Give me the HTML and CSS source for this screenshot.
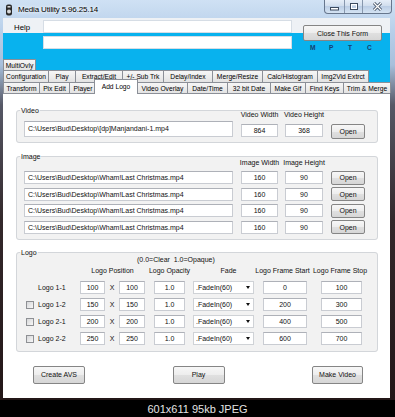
FILE: index.html
```html
<!DOCTYPE html>
<html>
<head>
<meta charset="utf-8">
<title>Media Utility</title>
<link rel="stylesheet" href="styles.css">
</head>
<body>
<div class="shot">
  <div class="window">
    <div class="titlebar">
      <svg class="appicon" width="8" height="12" viewBox="0 0 8 12"><rect x="1" y="0.5" width="6" height="11" rx="2" fill="#2a2a2a"/><circle cx="4" cy="7.5" r="2" fill="#d8d8d8"/><rect x="2.5" y="2" width="3" height="1.6" fill="#d8d8d8"/></svg>
      <span class="title">Media Utility 5.96.25.14</span>
      <div class="winctl">
        <span class="wc wc-min"><svg width="19" height="13" viewBox="0 0 19 13"><rect x="5.5" y="7.5" width="8" height="2.5" fill="#fff" stroke="#3c4a5e"/></svg></span>
        <span class="wc wc-max"><svg width="18" height="13" viewBox="0 0 18 13"><rect x="5.5" y="3.5" width="7" height="6" fill="none" stroke="#3c4a5e"/><rect x="6.5" y="4.5" width="5" height="4" fill="none" stroke="#fff"/></svg></span>
        <span class="wc wc-close"><svg width="29" height="13" viewBox="0 0 29 13"><path d="M11 3L18 10M18 3L11 10" stroke="#3c4a5e" stroke-width="3"/><path d="M11 3L18 10M18 3L11 10" stroke="#fff" stroke-width="1.3"/></svg></span>
      </div>
    </div>
    <div class="frame">
      <div class="client">
        <div class="head">
          <div class="menu">Help</div>
          <div class="ttb ttb1"></div>
          <div class="headright">
            <button class="btn closebtn">Close This Form</button>
            <div class="mptc"><span>M</span><span>P</span><span>T</span><span>C</span></div>
          </div>
          <div class="ttb ttb2"></div>
        </div>
        <div class="tabs">
          <div class="tabrow r0"><div class="tab">MultiOvly</div></div>
          <div class="tabrow r1">
            <div class="tab">Configuration</div><div class="tab">Play</div><div class="tab">Extract/Edit</div><div class="tab">+/- Sub Trk</div><div class="tab">Delay/Index</div><div class="tab">Merge/Resize</div><div class="tab">Calc/Histogram</div><div class="tab">Img2Vid Extrct</div>
          </div>
          <div class="tabrow r2">
            <div class="tab">Transform</div><div class="tab">Pix Edit</div><div class="tab">Player</div><div class="tab sel">Add Logo</div><div class="tab">Video Overlay</div><div class="tab">Date/Time</div><div class="tab">32 bit Date</div><div class="tab">Make Gif</div><div class="tab">Find Keys</div><div class="tab">Trim &amp; Merge</div>
          </div>
        </div>
        <div class="page">
          <fieldset class="grp vgrp">
            <legend>Video</legend>
            <div class="fgrid fhdr">
              <span></span><span class="hc nw">Video Width</span><span class="hc nh">Video Height</span><span></span>
            </div>
            <div class="fgrid vrow">
              <div class="tb path tall">C:\Users\Bud\Desktop\[dp]Manjandani-1.mp4</div>
              <div class="tb num nw">864</div>
              <div class="tb num nh">368</div>
              <button class="btn open vopen">Open</button>
            </div>
          </fieldset>

          <fieldset class="grp igrp">
            <legend>Image</legend>
            <div class="fgrid fhdr ihdr">
              <span></span><span class="hc nw">Image Width</span><span class="hc nh">Image Height</span><span></span>
            </div>
            <div class="fgrid irows">
              <div class="tb path">C:\Users\Bud\Desktop\Wham!Last Christmas.mp4</div><div class="tb num nw">160</div><div class="tb num nh">90</div><button class="btn open">Open</button>
              <div class="tb path">C:\Users\Bud\Desktop\Wham!Last Christmas.mp4</div><div class="tb num nw">160</div><div class="tb num nh">90</div><button class="btn open">Open</button>
              <div class="tb path">C:\Users\Bud\Desktop\Wham!Last Christmas.mp4</div><div class="tb num nw">160</div><div class="tb num nh">90</div><button class="btn open">Open</button>
              <div class="tb path">C:\Users\Bud\Desktop\Wham!Last Christmas.mp4</div><div class="tb num nw">160</div><div class="tb num nh">90</div><button class="btn open">Open</button>
            </div>
          </fieldset>

          <fieldset class="grp lgrp">
            <legend>Logo</legend>
            <div class="lnote">(0.0=Clear&nbsp; 1.0=Opaque)</div>
            <div class="lgrid lhdr">
              <span class="h-pos">Logo Position</span>
              <span class="h-op">Logo Opacity</span>
              <span class="h-fade">Fade</span>
              <span class="h-start">Logo Frame Start</span>
              <span class="h-stop">Logo Frame Stop</span>
            </div>
            <div class="lgrid lrows">
              <span></span><span class="llabel">Logo 1-1</span><div class="tb num bx">100</div><span class="x">X</span><div class="tb num by">100</div><div class="tb num bo">1.0</div><div class="combo"><span>.FadeIn(60)</span><i class="arrow"></i></div><div class="tb num bs">0</div><div class="tb num be">100</div>
              <span class="cb"></span><span class="llabel">Logo 1-2</span><div class="tb num bx">150</div><span class="x">X</span><div class="tb num by">150</div><div class="tb num bo">1.0</div><div class="combo"><span>.FadeIn(60)</span><i class="arrow"></i></div><div class="tb num bs">200</div><div class="tb num be">300</div>
              <span class="cb"></span><span class="llabel">Logo 2-1</span><div class="tb num bx">200</div><span class="x">X</span><div class="tb num by">200</div><div class="tb num bo">1.0</div><div class="combo"><span>.FadeIn(60)</span><i class="arrow"></i></div><div class="tb num bs">400</div><div class="tb num be">500</div>
              <span class="cb"></span><span class="llabel">Logo 2-2</span><div class="tb num bx">250</div><span class="x">X</span><div class="tb num by">250</div><div class="tb num bo">1.0</div><div class="combo"><span>.FadeIn(60)</span><i class="arrow"></i></div><div class="tb num bs">600</div><div class="tb num be">700</div>
            </div>
          </fieldset>

          <div class="actions">
            <button class="btn abtn">Create AVS</button>
            <button class="btn abtn">Play</button>
            <button class="btn abtn mk">Make Video</button>
          </div>
        </div>
      </div>
    </div>
  </div>
  <div class="caption">601x611 95kb JPEG</div>
</div>
</body>
</html>
```

FILE: styles.css
```css
* { box-sizing: border-box; }
html, body { margin: 0; padding: 0; }
body {
  width: 395px;
  height: 417px;
  overflow: hidden;
  background: #000;
  font-family: "Liberation Sans", Arial, sans-serif;
  color: #111;
}
.shot { display: flex; flex-direction: column; height: 417px; }

.window {
  height: 400px;
  display: flex;
  flex-direction: column;
  background: linear-gradient(to bottom, #cfe1f4 0px, #b9d0ea 30px, #a7bfdb 65px, #565866 105px, #33282b 220px, #231617 400px);
}

/* title bar */
.titlebar {
  height: 18px;
  display: flex;
  align-items: center;
  padding-left: 5px;
}
.appicon { display: block; margin-top: 1px; }
.title {
  margin-left: 5px;
  font-size: 8px;
  letter-spacing: -0.15px;
  color: #000;
  text-shadow: 0 0 5px #fff, 0 0 3px #fff;
}
.winctl {
  margin-left: auto;
  margin-right: 3px;
  align-self: flex-start;
  display: flex;
  height: 14px;
  border: 1px solid #66768d;
  border-top: none;
  border-radius: 0 0 4px 4px;
  overflow: hidden;
  background: linear-gradient(#e6eef8, #cfdcec 50%, #bccee5 50%, #d4e3f3);
}
.wc { display: block; height: 13px; }
.wc svg { display: block; }
.wc + .wc { border-left: 1px solid #8797ad; }
.wc-min { width: 19px; }
.wc-max { width: 18px; }
.wc-close { width: 29px; }

/* frame + client */
.frame { flex: 1; display: flex; padding: 0 5px 2px 3px; }
.client { flex: 1; display: flex; flex-direction: column; background: #fff; }

.head {
  display: grid;
  grid-template-columns: 40px 249px 1fr;
  grid-template-rows: 15px 26px;
  background: linear-gradient(#eef1f5 15px, #08b2ee 15px);
}
.menu {
  grid-column: 1; grid-row: 1;
  font-size: 7.8px;
  padding: 5px 0 0 11px;
  color: #000;
}
.ttb { background: #fff; border: 1px solid #d6dde5; }
.ttb1 { grid-column: 2; grid-row: 1; height: 13px; align-self: end; }
.ttb2 { grid-column: 2; grid-row: 2; height: 13px; margin-top: 3px; }
.headright {
  grid-column: 3; grid-row: 1 / span 2;
  display: flex; flex-direction: column; align-items: flex-start;
  padding: 7px 0 0 11px;
}
.closebtn { width: 79px; height: 16px; font-size: 6.8px; }
.mptc {
  display: flex;
  margin: 3px 0 0 7px;
  font-size: 6.6px;
  font-weight: bold;
  line-height: 8px;
  color: #15406f;
}
.mptc span { width: 19px; }

/* tabs */
.tabs { background: #08b2ee; display: flex; flex-direction: column; }
.tabrow { display: grid; }
.r0 { grid-template-columns: 32px; height: 11px; }
.r1 { grid-template-columns: 45px 27px 47px 41px 49px 50px 55px 51px; height: 12px; }
.r2 { grid-template-columns: 36px 30px 27px 41px 50px 40px 43px 35px 38px 47px; height: 11px; }
.tab {
  border: 1px solid #8b8f97;
  border-bottom: none;
  margin-right: -1px;
  background: linear-gradient(#f6f6f6, #e3e3e3);
  font-size: 6.7px;
  line-height: 9px;
  color: #000;
  display: flex;
  align-items: center;
  justify-content: center;
  white-space: nowrap;
  overflow: hidden;
}
.tab.sel {
  background: #fff;
  margin: -3px -1px -1px -2px;
  position: relative;
  z-index: 1;
  padding-bottom: 2px;
}

/* page */
.page {
  flex: 1;
  border-top: 1px solid #8b8f97;
  background: #fff;
  padding-top: 12px;
  display: flex;
  flex-direction: column;
  font-size: 7px;
}
.grp {
  margin: 0 0 0 13px;
  width: 362px;
  min-width: 0;
  border: 1px solid #d3d6da;
  border-radius: 3px;
  background: #f2f2f2;
  padding: 0 0 5px 0;
}
.grp legend {
  padding: 0 1px;
  margin-left: 3px;
  font-size: 7px;
  line-height: 9px;
  color: #111;
}
.igrp { margin-top: 9px; }
.lgrp { margin-top: 8px; padding-bottom: 6px; }

.fgrid {
  display: grid;
  grid-template-columns: 217px 44px 46px 34px;
  margin-left: 7px;
}
.fhdr { height: 8px; line-height: 8px; margin-top: -4px; }
.ihdr { margin-top: -2px; }
.hc { display: flex; justify-content: center; white-space: nowrap; }
.nw { width: 37px; }
.nh { width: 38px; }

.vrow { margin-top: 2px; height: 16px; align-items: end; }
.irows { margin-top: 4px; grid-auto-rows: 13px; row-gap: 3.5px; align-items: center; }

.tb {
  background: #fff;
  border: 1px solid #c9ccd2;
  border-top-color: #aeb1b8;
  height: 13px;
  line-height: 11px;
  font-size: 7px;
  white-space: nowrap;
  overflow: hidden;
  color: #111;
}
.path { width: 209px; padding-left: 3px; }
.tall { height: 16px; line-height: 14px; }
.num { text-align: center; }

.btn {
  font-family: "Liberation Sans", Arial, sans-serif;
  font-size: 7px;
  color: #111;
  border: 1px solid #858585;
  border-radius: 2px;
  background: linear-gradient(#f7f7f7 0, #ededed 50%, #e0e0e0 51%, #d6d6d6 100%);
  padding: 0;
  display: flex;
  align-items: center;
  justify-content: center;
  white-space: nowrap;
}
.open { width: 34px; height: 14px; }
.vopen { height: 15px; margin-bottom: -2px; }

/* logo group */
.lnote { margin: -0.5px 0 0 120px; height: 8px; line-height: 8px; white-space: nowrap; }
.lgrid {
  display: grid;
  grid-template-columns: 12px 42px 25px 14px 35px 39px 70px 58px 41px;
  margin-left: 9px;
}
.lhdr { margin-top: 2.5px; height: 8px; line-height: 8px; }
.lhdr span { display: flex; justify-content: center; white-space: nowrap; }
.h-pos { grid-column: 3 / 6; padding-right: 9px; }
.h-op { grid-column: 6; padding-right: 8px; }
.h-fade { grid-column: 7; padding: 0 9px 0 10px; }
.h-start { grid-column: 8; padding-right: 19px; }
.h-stop { grid-column: 9; padding-right: 3px; }

.lrows { margin-top: 6px; grid-auto-rows: 13px; row-gap: 4px; align-items: center; }
.lrows > * { justify-self: start; }
.llabel { white-space: nowrap; color: #111; }
.x { justify-self: center; }
.bx { width: 25px; }
.by { width: 26px; }
.bo { width: 31px; }
.bs { width: 44px; }
.be { width: 41px; }
.cb {
  width: 8px; height: 8px;
  border: 1px solid #8e9094;
  background: linear-gradient(135deg, #d6d7d9, #f7f7f7);
  margin-top: 1px;
}
.combo {
  width: 61px; height: 13px;
  background: #fff;
  border: 1px solid #cfd2d6;
  display: flex; align-items: center; justify-content: space-between;
  padding: 0 3px 0 2px;
  white-space: nowrap;
}
.arrow {
  width: 0; height: 0;
  border-left: 2.5px solid transparent;
  border-right: 2.5px solid transparent;
  border-top: 3px solid #111;
}

.actions {
  display: flex;
  justify-content: space-between;
  margin: 14px 27px 0 30px;
}
.abtn { width: 52px; height: 18px; }
.abtn.mk { width: 51px; }

.caption {
  height: 17px;
  display: flex;
  align-items: center;
  justify-content: center;
  color: #e4e4e4;
  font-size: 11px;
}
```
